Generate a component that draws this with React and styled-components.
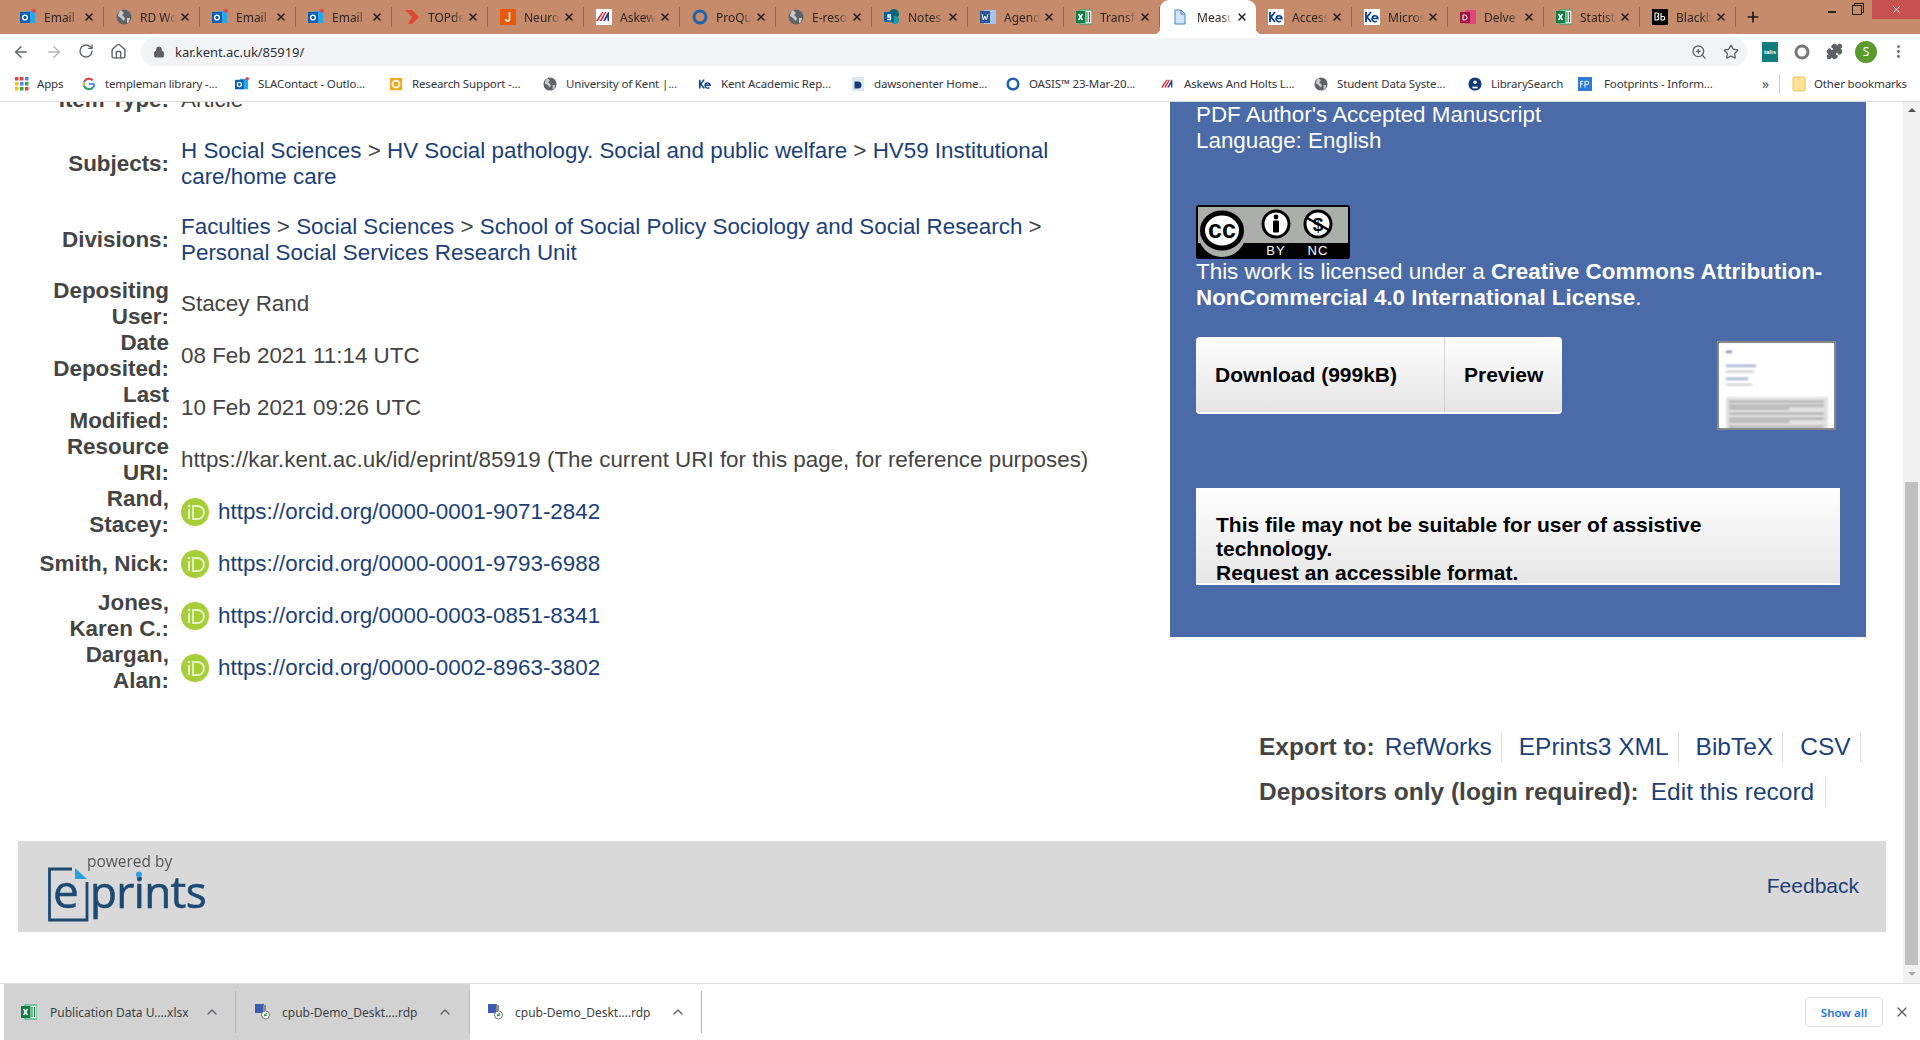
import React from "react";
import styled, { createGlobalStyle } from "styled-components";
import { ArrowLeft, ArrowRight, RotateCw, Home, Lock, ZoomIn, Star, Puzzle, ChevronUp, X, MoreVertical, Plus } from "lucide-react";

const Global = createGlobalStyle`
  html, body { margin: 0; padding: 0; height: 1040px; overflow: hidden; background: #fff; }
  body { font-family: "Liberation Sans", Arial, sans-serif; }
  a { color: inherit; text-decoration: none; }
`;

const Chrome = styled.div`display:flex;flex-direction:column;width:1920px;height:1040px;overflow:hidden;`;
const TabStrip = styled.div`display:flex;height:34px;padding-left:8px;background:#c58b6b;flex:none;position:relative;`;
const Tab = styled.div`
  width:96px;height:34px;box-sizing:border-box;padding-left:12px;display:flex;align-items:center;position:relative;flex:none;
  background:${p => p.$active ? "#fff" : "transparent"};
  border-radius:${p => p.$active ? "9px 9px 0 0" : "0"};
  ${p => p.$active ? "" : `&::after{content:"";position:absolute;right:0;top:7px;height:20px;width:1px;background:#8e6a54;}`}
  ${p => p.$active ? `
    &::before{content:"";position:absolute;left:-6px;bottom:0;width:6px;height:6px;background:radial-gradient(circle at 0 0,transparent 6px,#fff 6.5px);}
    &::after{content:"";position:absolute;right:-6px;bottom:0;width:6px;height:6px;background:radial-gradient(circle at 100% 0,transparent 6px,#fff 6.5px);}
  ` : ""}
`;
const TabTitle = styled.span`
  width:36px;margin-left:${p => p.$active ? "9px" : "8px"};overflow:hidden;white-space:nowrap;font:12px "Noto Sans","Open Sans",sans-serif;color:#2c2622;
  -webkit-mask-image:linear-gradient(90deg,#000 70%,transparent);mask-image:linear-gradient(90deg,#000 70%,transparent);
`;
const TabClose = styled.span`display:flex;margin-left:3px;color:#221f1e;`;
const NewTab = styled.span`display:flex;align-items:center;margin-left:9px;color:#1e1a18;`;
const WindowControls = styled.div`margin-left:auto;display:flex;height:19px;align-items:center;`;
const WinMin = styled.span`width:8px;height:2px;background:#222;margin-right:16px;margin-top:4px;`;
const WinRestore = styled.span`width:8px;height:8px;border:1px solid #222;margin-right:10px;box-shadow:2px -2px 0 -1px #c58b6b,2px -2px 0 0 #222;`;
const WinClose = styled.span`width:48px;height:19px;background:#c75050;color:#fff;display:flex;align-items:center;justify-content:center;`;

const Toolbar = styled.div`height:35px;display:flex;align-items:center;background:#fff;flex:none;position:relative;`;
const NavIcon = styled.span`width:32.4px;display:flex;justify-content:center;color:${p => p.$off ? "#b4b6b9" : "#5f6368"};`;
const NavGroup = styled.div`display:flex;padding-left:5px;width:136px;box-sizing:border-box;flex:none;`;
const Omnibox = styled.div`
  width:1606px;height:28px;margin-left:5px;background:#f1f3f4;border-radius:14px;display:flex;align-items:center;padding:0 8px 0 0;box-sizing:border-box;color:#5f6368;flex:none;
`;
const LockWrap = styled.span`display:flex;margin-left:12px;color:#5f6368;`;
const Url = styled.span`margin-left:10px;font:13px "Noto Sans","Open Sans",sans-serif;letter-spacing:-.05px;color:#2f3134;`;
const OmniRight = styled.span`margin-left:auto;display:flex;align-items:center;gap:16px;`;
const Extensions = styled.div`display:flex;align-items:center;margin-left:7px;`;
const ExtSlot = styled.span`width:32px;display:flex;align-items:center;justify-content:center;flex:none;`;
const Talis = styled.span`width:16px;height:20px;background:#0f7c80;color:#fff;font:bold 6px "Liberation Sans",sans-serif;display:flex;align-items:center;justify-content:center;`;
const Avatar = styled.span`width:22px;height:22px;border-radius:50%;background:#5b9b2e;color:#fff;font:12px "Noto Sans",sans-serif;display:flex;align-items:center;justify-content:center;`;

const BookmarkBar = styled.div`height:33px;display:flex;align-items:center;padding:0 0 3px 14px;box-sizing:border-box;background:#fff;border-bottom:1px solid #dcdcdc;flex:none;`;
const Bookmark = styled.div`width:${p => p.$w}px;flex:none;display:flex;align-items:center;gap:${p => p.$gap || 9}px;font:11.5px "Noto Sans","Open Sans",sans-serif;color:#33363a;white-space:nowrap;letter-spacing:-.15px;`;
const Chevrons = styled.span`font:14px "Noto Sans",sans-serif;color:#555;width:15px;flex:none;margin-left:-2px;margin-right:2px;`;
const BarSep = styled.span`width:1px;height:20px;background:#ccc;margin-right:11px;flex:none;`;

const Viewport = styled.div`flex:1;display:flex;min-height:0;overflow:hidden;background:#fff;`;
const Page = styled.div`flex:1;min-width:0;padding:0 17px 0 18px;height:881px;overflow:hidden;`;
const Upper = styled.div`display:flex;margin-top:-28px;`;
const Details = styled.div`width:1152px;flex:none;padding-left:19px;box-sizing:border-box;`;
const Row = styled.div`display:flex;align-items:center;height:${p => p.$tall ? 76 : 52}px;`;
const Label = styled.div`width:132px;flex:none;text-align:right;font:bold 22.4px/26px "Liberation Sans",sans-serif;color:#444;`;
const Value = styled.div`margin-left:12px;flex:none;width:950px;font:22.4px/26px "Liberation Sans",sans-serif;color:#444;`;
const Crumb = styled.a`color:#1b3f78;`;
const OrcidLine = styled.div`display:flex;align-items:center;`;
const OrcidLink = styled.a`margin-left:9px;color:#1b3f78;`;

const Panel = styled.div`width:696px;height:563px;flex:none;background:#4a6aa8;color:#fff;padding:28px 26px 0 26px;box-sizing:border-box;font:22.4px/26px "Liberation Sans",sans-serif;`;
const Meta = styled.div`height:77px;`;
const Licence = styled.div`margin-top:0;width:660px;`;
const BadgeWrap = styled.div`height:54px;margin-top:26px;margin-bottom:0;`;
const DownloadRow = styled.div`display:flex;margin-top:26px;align-items:flex-start;`;
const ButtonGroup = styled.div`display:flex;width:366px;height:77px;border-radius:4px;overflow:hidden;background:linear-gradient(#fff,#e4e4e4);border-bottom:2px solid #fff;box-sizing:border-box;`;
const Btn = styled.div`display:flex;align-items:center;padding:0 18px 0 19px;width:${p => p.$w}px;box-sizing:border-box;font:bold 21px "Liberation Sans",sans-serif;color:#000;${p => p.$first ? "border-right:1px solid #d2d2d2;" : ""}`;
const ThumbWrap = styled.div`margin-left:155px;margin-top:4px;display:flex;`;
const AccessBox = styled.div`
  margin-top:58px;width:644px;height:97px;box-sizing:border-box;padding:25px 20px 0 20px;background:linear-gradient(#fff,#e6e6e6);border-bottom:2px solid #fff;
  font:bold 21px/24px "Liberation Sans",sans-serif;color:#000;overflow:hidden;
`;

const Links = styled.div`margin-top:30px;padding-left:1241px;`;
const LinkRow = styled.div`display:flex;align-items:center;height:45px;white-space:nowrap;`;
const LinkLabel = styled.span`font:bold 24.500px "Liberation Sans",sans-serif;color:#444;margin-right:${p => p.$gap}px;`;
const ActionLink = styled.a`font:24.500px/30px "Liberation Sans",sans-serif;color:#1b3f78;padding:0 ${p => p.$pr || 10}px 0 ${p => p.$pl || 0}px;border-right:1px solid #ddd;`;

const Footer = styled.div`margin-top:27px;height:91px;background:#d9d9d9;display:flex;align-items:center;justify-content:space-between;padding:0 27px 0 30px;box-sizing:border-box;`;
const Feedback = styled.a`font:21px "Liberation Sans",sans-serif;color:#1b3f78;margin-top:-2px;`;

const Scrollbar = styled.div`width:17px;flex:none;background:#f1f1f1;position:relative;display:flex;flex-direction:column;align-items:center;`;
const ScrollUp = styled.span`width:0;height:0;margin-top:6px;border:4px solid transparent;border-top:0;border-bottom:4px solid #505050;`;
const ScrollThumb = styled.span`width:13px;height:483px;background:#c0c0c0;margin-top:370px;`;
const ScrollDown = styled.span`width:0;height:0;margin-top:7px;border:4px solid transparent;border-bottom:0;border-top:4px solid #a8a8a8;`;

const Downloads = styled.div`height:56px;flex:none;border-top:1px solid #dcdcdc;background:#fff;display:flex;align-items:center;padding-left:4px;`;
const DownloadItem = styled.div`width:${p => p.$w}px;height:56px;box-sizing:border-box;flex:none;display:flex;align-items:center;background:${p => p.$active ? "#fff" : "#d2d2d2"};position:relative;padding-left:${p => p.$pl}px;
  &::after{content:"";position:absolute;right:0;top:7px;bottom:7px;width:1px;background:#b5b5b5;}`;
const FileName = styled.span`margin-left:${p => p.$ml}px;font:12px "Noto Sans","Open Sans",sans-serif;color:#3c4043;width:${p => p.$tw}px;white-space:nowrap;flex:none;`;
const Chevron = styled.span`display:flex;color:#5f6368;`;
const ShowAll = styled.div`margin-left:auto;width:78px;height:30px;box-sizing:border-box;border:1px solid #dadce0;border-radius:4px;display:flex;align-items:center;justify-content:center;font:600 11.5px "Noto Sans","Open Sans",sans-serif;color:#1a73e8;`;
const DlClose = styled.span`display:flex;margin:0 10px 0 11px;color:#5f6368;`;

const Ic = ({ children, vb = "0 0 16 16", s = 16 }) => <svg width={s} height={s} viewBox={vb} style={{ flex: "none", display: "block" }}>{children}</svg>;

const Fav = ({ k, s = 16 }) => {
  switch (k) {
    case "outlook": return <Ic s={s}><rect x="6" y="2" width="9" height="12" fill="#28a8ea" /><rect x="0" y="3" width="10" height="11" rx="1" fill="#0a5fb4" /><circle cx="5" cy="8.5" r="2.4" fill="none" stroke="#fff" strokeWidth="1.4" /><circle cx="14" cy="2" r="2" fill="#e0435a" /></Ic>;
    case "globe": return <Ic s={s}><circle cx="8" cy="8" r="7.5" fill="#5f6368" /><path d="M5 1l3 3-2 2 3 3-1 3-3-3-3-2 1-4zM11 9l3 0-1 4-2 1z" fill="#c9c9c9" /></Ic>;
    case "top": return <Ic s={s}><path d="M1 1h7l7 7-7 7H4l4-7z" fill="#dc4a30" /></Ic>;
    case "j": return <Ic s={s}><rect width="16" height="16" fill="#e8590c" /><path d="M9.5 3v7a2 2 0 0 1-4 0" fill="none" stroke="#fff" strokeWidth="1.6" /></Ic>;
    case "askews": return <Ic s={s}><rect width="16" height="16" fill="#fff" /><path d="M0 12L6 3h1.5L2 12zM3.500 12L9 3h1.500L5.500 12z" fill="#d8232a" /><path d="M7 12l5-9h1v9h-1.500V8L9 12z" fill="#2b3f8f" /></Ic>;
    case "proquest": return <Ic s={s}><circle cx="8" cy="8" r="6" fill="none" stroke="#1f62ac" strokeWidth="3" /></Ic>;
    case "sp": return <Ic s={s}><circle cx="10" cy="5" r="5" fill="#0b6a6f" /><circle cx="11" cy="11" r="4" fill="#1a9ba1" /><rect x="0" y="3" width="10" height="10" rx="1" fill="#0f5e9c" /><path d="M7 6H4v2h2.500v2.500H3" fill="none" stroke="#fff" strokeWidth="1.300" /></Ic>;
    case "word": return <Ic s={s}><rect x="4" y="1" width="12" height="14" fill="#a9c4ec" /><rect y="2" width="10" height="12" fill="#2b579a" /><path d="M2 5l1.300 6 1.500-4 1.500 4L8 5" fill="none" stroke="#fff" strokeWidth="1" /></Ic>;
    case "excel": return <Ic s={s}><rect x="4" y="1" width="12" height="14" fill="#e8f3ec" stroke="#21a366" strokeWidth="1" /><rect y="2" width="9.500" height="12" fill="#107c41" /><path d="M2.500 5l4 6m0-6l-4 6" stroke="#fff" strokeWidth="1.400" /><path d="M11 3v10M13.500 3v10" stroke="#107c41" strokeWidth="1" /></Ic>;
    case "doc": return <Ic s={s}><path d="M3 1h6l4 4v10H3z" fill="#d2e3fc" stroke="#4285c4" strokeWidth="1" /><path d="M9 1v4h4" fill="none" stroke="#4285c4" /></Ic>;
    case "ke": return <Ic s={s}><rect width="16" height="16" fill="#fff" /><path d="M2 3v10M7 3L3 8l4 5" fill="none" stroke="#0a3f8c" strokeWidth="1.800" /><path d="M8 9.500h6a3 3 0 1 0-1 2.500" fill="none" stroke="#0a3f8c" strokeWidth="1.600" /></Ic>;
    case "delve": return <Ic s={s}><rect x="5" y="1" width="11" height="14" fill="#e0457b" /><rect y="3" width="10" height="11" fill="#a0173f" /><path d="M3 6v5h1.500a2.500 2.500 0 0 0 0-5z" fill="none" stroke="#fff" /></Ic>;
    case "bb": return <Ic s={s}><rect width="16" height="16" fill="#000" /><path d="M3 4v7h2a1.500 1.500 0 0 0 0-3.500 1.500 1.500 0 0 0 0-3.500zM9 4v7h2a1.500 1.500 0 0 0 0-3.500H9" fill="none" stroke="#fff" strokeWidth="1.100" /></Ic>;
    case "apps": return <Ic s={s}><g>{[["#ea4335", 1, 1], ["#ea4335", 6, 1], ["#4285f4", 11, 1], ["#fbbc05", 1, 6], ["#4285f4", 6, 6], ["#34a853", 11, 6], ["#fbbc05", 1, 11], ["#34a853", 6, 11], ["#ea4335", 11, 11]].map(([c, x, y], i) => <rect key={i} x={x} y={y} width="3.500" height="3.500" fill={c} />)}</g></Ic>;
    case "g": return <Ic s={s}><path d="M14 8a6 6 0 1 1-1.800-4.300" fill="none" stroke="#4285f4" strokeWidth="2.200" /><path d="M3 4.500A6 6 0 0 1 12 3.500" fill="none" stroke="#ea4335" strokeWidth="2.200" /><path d="M2.300 6a6 6 0 0 0 0 4" fill="none" stroke="#fbbc05" strokeWidth="2.200" /><path d="M2.600 10.500a6 6 0 0 0 9 2" fill="none" stroke="#34a853" strokeWidth="2.200" /><path d="M8 8h6" stroke="#4285f4" strokeWidth="2" /></Ic>;
    case "research": return <Ic s={s}><rect x="1" y="1" width="14" height="14" rx="1" fill="#f3a81c" /><circle cx="8" cy="8" r="4" fill="none" stroke="#fff" strokeWidth="2" /></Ic>;
    case "dawson": return <Ic s={s}><rect x="1" y="0" width="14" height="16" fill="#dfe7ee" /><path d="M4 5h4a4 4 0 0 1 0 8H4z" fill="#123a78" /></Ic>;
    case "library": return <Ic s={s}><circle cx="8" cy="8" r="7.500" fill="#123a78" /><circle cx="8" cy="6" r="2" fill="#fff" /><path d="M5 11h6v2H5z" fill="#fff" /></Ic>;
    case "fp": return <Ic s={s}><rect width="16" height="16" fill="#2d7bd8" /><path d="M3 12V5h3M3 8h2.500M8 12V5h2.500a1.700 1.700 0 0 1 0 3.500H8" fill="none" stroke="#fff" strokeWidth="1.100" /></Ic>;
    case "folder": return <Ic s={s}><rect x="2" y="1" width="12" height="14" rx="1" fill="#fde293" stroke="#e8c458" /></Ic>;
    case "rdp": return <Ic s={s}><rect x="1" y="0" width="9" height="9" fill="#3b5bb5" /><rect x="9" y="1" width="3" height="9" fill="#8d8d8d" /><circle cx="11.500" cy="11" r="4" fill="#fff" stroke="#777" /><path d="M10 11l3-1.500M10 12l3-1" stroke="#1c8a3b" /></Ic>;
    default: return null;
  }
};

const OrcidIcon = () => (
  <svg width="28" height="28" viewBox="0 0 28 28" style={{ flex: "none", display: "block" }}>
    <circle cx="14" cy="14" r="14" fill="#a6ce39" />
    <rect x="7" y="11" width="2" height="10" fill="#e8f3c8" /><circle cx="8" cy="8" r="1.300" fill="#e8f3c8" />
    <path d="M12 8h4.500a6 6 0 0 1 0 13H12z" fill="none" stroke="#e8f3c8" strokeWidth="1.800" />
  </svg>
);

const CCBadge = () => (
  <svg width="154" height="54" viewBox="0 0 154 54" style={{ display: "block" }}>
    <rect width="154" height="54" rx="3" fill="#000" />
    <rect x="2" y="2" width="150" height="36" fill="#aab0a9" />
    <ellipse cx="26" cy="28" rx="24" ry="24" fill="#aab0a9" />
    <ellipse cx="26" cy="25.500" rx="19.500" ry="17.500" fill="#fff" stroke="#000" strokeWidth="5" />
    <text x="26" y="33" textAnchor="middle" fontFamily="Liberation Sans" fontWeight="700" fontSize="25" fill="#000">cc</text>
    <circle cx="80" cy="19" r="13" fill="#fff" stroke="#000" strokeWidth="3" />
    <circle cx="80" cy="12" r="2.400" fill="#000" /><rect x="77" y="15.500" width="6" height="12" rx="1" fill="#000" />
    <circle cx="122" cy="19" r="13" fill="#fff" stroke="#000" strokeWidth="3" />
    <text x="122" y="26" textAnchor="middle" fontFamily="Liberation Sans" fontWeight="700" fontSize="19" fill="#000">$</text>
    <path d="M111 13l22 12" stroke="#000" strokeWidth="2" />
    <text x="80" y="50" textAnchor="middle" fontFamily="Liberation Sans" fontSize="13" fill="#fff" letterSpacing="1">BY</text>
    <text x="122" y="50" textAnchor="middle" fontFamily="Liberation Sans" fontSize="13" fill="#fff" letterSpacing="1">NC</text>
  </svg>
);

const Thumb = () => (
  <svg width="119" height="89" viewBox="0 0 119 89" style={{ display: "block" }}>
    <rect x="1" y="1" width="117" height="87" fill="#fff" stroke="#888" strokeWidth="2" />
    <g style={{ filter: "blur(.9px)" }}>
      <rect x="9" y="10" width="6" height="1.500" fill="#333a7a" />
      <rect x="9" y="24" width="30" height="1.500" fill="#6f83b5" />
      <rect x="9" y="30" width="28" height="1.200" fill="#aaa" />
      <rect x="9" y="37" width="22" height="1.500" fill="#6f83b5" />
      <rect x="9" y="43" width="26" height="1.200" fill="#aaa" />
      <rect x="9" y="56" width="102" height="33" fill="#e2e2e2" />
      {[60, 64, 67, 72, 77, 80, 85].map((y, i) => <rect key={i} x="12" y={y} width={i % 3 === 2 ? 60 : 95} height="1.200" fill="#888" />)}
    </g>
    <rect x="1" y="1" width="117" height="87" fill="none" stroke="#888" strokeWidth="2" />
  </svg>
);

const EprintsLogo = () => (
  <svg width="172" height="70" viewBox="0 0 172 70" style={{ display: "block", filter: "blur(.4px)" }}>
    <text x="39" y="15" fontFamily="Open Sans" fontSize="15.500" fill="#555">powered by</text>
    <path d="M24 17H1.500V68H39V30" fill="none" stroke="#1d4a72" strokeWidth="2.800" />
    <path d="M27 16l12 11H27z" fill="#2a9fe0" />
    <text x="5" y="56" fontFamily="Open Sans" fontSize="46" fill="#1d4a72" stroke="#1d4a72" strokeWidth=".5">e</text>
    <text x="42" y="56" fontFamily="Open Sans" fontSize="44" fill="#1d4a72" stroke="#1d4a72" strokeWidth=".6" letterSpacing="-.6">prints</text>
    <circle cx="91" cy="22.500" r="3" fill="#2a9fe0" />
  </svg>
);

const tabs = [["outlook", "Email"], ["globe", "RD Work"], ["outlook", "Email"], ["outlook", "Email"], ["top", "TOPdesk"], ["j", "Neurology"], ["askews", "Askews"], ["proquest", "ProQuest"], ["globe", "E-resources"], ["sp", "Notes"], ["word", "Agenda"], ["excel", "Transfer"], ["doc", "Measuring", true], ["ke", "Access"], ["ke", "Microsoft"], ["delve", "Delve"], ["excel", "Statistics"], ["bb", "Blackboard"]];
const bookmarks = [
  ["g", "templeman library -...", 153], ["outlook", "SLAContact - Outlo...", 154], ["research", "Research Support -...", 154], ["globe", "University of Kent |...", 155], ["ke", "Kent Academic Rep...", 153], ["dawson", "dawsonenter Home...", 155], ["proquest", "OASIS™ 23-Mar-20...", 155], ["askews", "Askews And Holts L...", 153], ["globe", "Student Data Syste...", 154], ["library", "LibrarySearch", 110], ["fp", "Footprints - Inform...", 186, 12],
];
const orcids = [["Rand, Stacey:", "0000-0001-9071-2842"], ["Smith, Nick:", "0000-0001-9793-6988"], ["Jones, Karen C.:", "0000-0003-0851-8341"], ["Dargan, Alan:", "0000-0002-8963-3802"]];

export default function App() {
  return (
    <Chrome>
      <Global />
      <TabStrip>
        {tabs.map(([k, t, a], i) => (
          <Tab key={i} $active={a}>
            <Fav k={k} />
            <TabTitle $active={a}>{t}</TabTitle>
            <TabClose><X size={12} strokeWidth={3} /></TabClose>
          </Tab>
        ))}
        <NewTab><Plus size={16} strokeWidth={2.5} /></NewTab>
        <WindowControls>
          <WinMin /><WinRestore />
          <WinClose><X size={11} strokeWidth={2} /></WinClose>
        </WindowControls>
      </TabStrip>
      <Toolbar>
        <NavGroup>
          <NavIcon><ArrowLeft size={18} /></NavIcon>
          <NavIcon $off><ArrowRight size={18} /></NavIcon>
          <NavIcon><RotateCw size={16} /></NavIcon>
          <NavIcon><Home size={17} /></NavIcon>
        </NavGroup>
        <Omnibox>
          <LockWrap><Lock size={12} fill="#5f6368" /></LockWrap>
          <Url>kar.kent.ac.uk/85919/</Url>
          <OmniRight><ZoomIn size={16} /><Star size={16} /></OmniRight>
        </Omnibox>
        <Extensions>
          <ExtSlot><Talis>talis</Talis></ExtSlot>
          <ExtSlot><Ic><circle cx="8" cy="8" r="6" fill="none" stroke="#777" strokeWidth="3" /></Ic></ExtSlot>
          <ExtSlot><Puzzle size={17} fill="#5f6368" color="#5f6368" /></ExtSlot>
          <ExtSlot><Avatar>S</Avatar></ExtSlot>
          <ExtSlot><MoreVertical size={17} color="#5f6368" /></ExtSlot>
        </Extensions>
      </Toolbar>
      <BookmarkBar>
        <Bookmark $w={68} $gap={7}><Fav k="apps" />Apps</Bookmark>
        {bookmarks.map(([k, t, w, g], i) => <Bookmark key={i} $w={w} $gap={g}><Fav k={k} s={14} />{t}</Bookmark>)}
        <Chevrons>»</Chevrons>
        <BarSep />
        <Bookmark $w={120} $gap={7}><Fav k="folder" />Other bookmarks</Bookmark>
      </BookmarkBar>
      <Viewport>
        <Page>
          <Upper>
            <Details>
              <Row><Label>Item Type:</Label><Value>Article</Value></Row>
              <Row $tall><Label>Subjects:</Label><Value><Crumb>H Social Sciences</Crumb> &gt; <Crumb>HV Social pathology. Social and public welfare</Crumb> &gt; <Crumb>HV59 Institutional care/home care</Crumb></Value></Row>
              <Row $tall><Label>Divisions:</Label><Value><Crumb>Faculties</Crumb> &gt; <Crumb>Social Sciences</Crumb> &gt; <Crumb>School of Social Policy Sociology and Social Research</Crumb> &gt; <Crumb>Personal Social Services Research Unit</Crumb></Value></Row>
              <Row><Label>Depositing User:</Label><Value>Stacey Rand</Value></Row>
              <Row><Label>Date Deposited:</Label><Value>08 Feb 2021 11:14 UTC</Value></Row>
              <Row><Label>Last Modified:</Label><Value>10 Feb 2021 09:26 UTC</Value></Row>
              <Row><Label>Resource URI:</Label><Value>https://kar.kent.ac.uk/id/eprint/85919 (The current URI for this page, for reference purposes)</Value></Row>
              {orcids.map(([n, id]) => (
                <Row key={id}><Label>{n}</Label><Value><OrcidLine><OrcidIcon /><OrcidLink>https://orcid.org/{id}</OrcidLink></OrcidLine></Value></Row>
              ))}
            </Details>
            <Panel>
              <Meta>PDF Author's Accepted Manuscript<br />Language: English</Meta>
              <BadgeWrap><CCBadge /></BadgeWrap>
              <Licence>This work is licensed under a <b>Creative Commons Attribution-NonCommercial 4.0 International License</b>.</Licence>
              <DownloadRow>
                <ButtonGroup><Btn $first $w={249}>Download (999kB)</Btn><Btn $w={117}>Preview</Btn></ButtonGroup>
                <ThumbWrap><Thumb /></ThumbWrap>
              </DownloadRow>
              <AccessBox>This file may not be suitable for user of assistive technology.<br />Request an accessible format.</AccessBox>
            </Panel>
          </Upper>
          <Links>
            <LinkRow>
              <LinkLabel $gap={10}>Export to:</LinkLabel>
              <ActionLink $pr={9}>RefWorks</ActionLink><ActionLink $pl={17} $pr={9}>EPrints3 XML</ActionLink><ActionLink $pl={17} $pr={9}>BibTeX</ActionLink><ActionLink $pl={17} $pr={9}>CSV</ActionLink>
            </LinkRow>
            <LinkRow>
              <LinkLabel $gap={12}>Depositors only (login required):</LinkLabel>
              <ActionLink $pr={11}>Edit this record</ActionLink>
            </LinkRow>
          </Links>
          <Footer><EprintsLogo /><Feedback>Feedback</Feedback></Footer>
        </Page>
        <Scrollbar><ScrollUp /><ScrollThumb /><ScrollDown /></Scrollbar>
      </Viewport>
      <Downloads>
        <DownloadItem $w={232} $pl={17}><Fav k="excel" s={16} /><FileName $ml={13} $tw={154}>Publication Data U....xlsx</FileName><Chevron><ChevronUp size={16} /></Chevron></DownloadItem>
        <DownloadItem $w={234} $pl={18}><Fav k="rdp" s={16} /><FileName $ml={12} $tw={155}>cpub-Demo_Deskt....rdp</FileName><Chevron><ChevronUp size={16} /></Chevron></DownloadItem>
        <DownloadItem $w={232} $pl={17} $active><Fav k="rdp" s={16} /><FileName $ml={12} $tw={155}>cpub-Demo_Deskt....rdp</FileName><Chevron><ChevronUp size={16} /></Chevron></DownloadItem>
        <ShowAll>Show all</ShowAll>
        <DlClose><X size={16} /></DlClose>
      </Downloads>
    </Chrome>
  );
}
